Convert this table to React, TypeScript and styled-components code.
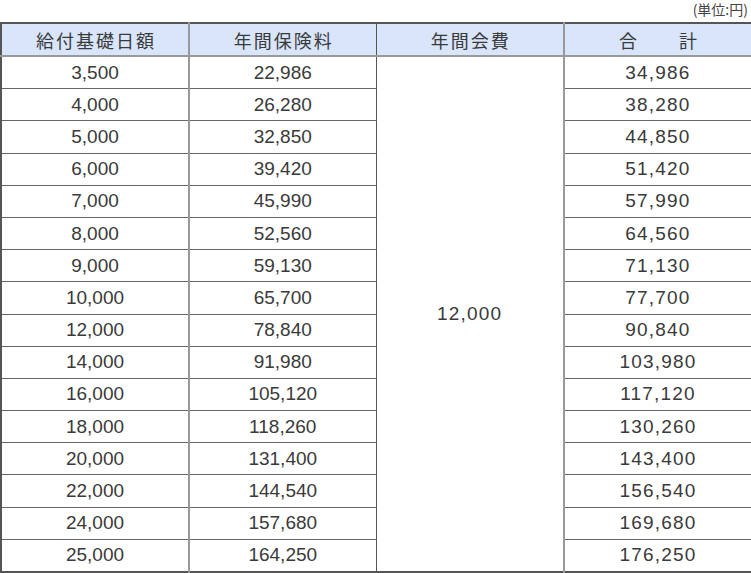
import React from "react";
import styled, { createGlobalStyle } from "styled-components";

const GlobalStyle = createGlobalStyle`
  html, body {
    margin: 0;
    padding: 0;
    background: #fff;
  }
  body {
    font-family: "Liberation Sans", Arial, "Noto Sans CJK JP", sans-serif;
    color: #333;
  }
`;

const rows = [
  ["3,500", "22,986", "34,986"],
  ["4,000", "26,280", "38,280"],
  ["5,000", "32,850", "44,850"],
  ["6,000", "39,420", "51,420"],
  ["7,000", "45,990", "57,990"],
  ["8,000", "52,560", "64,560"],
  ["9,000", "59,130", "71,130"],
  ["10,000", "65,700", "77,700"],
  ["12,000", "78,840", "90,840"],
  ["14,000", "91,980", "103,980"],
  ["16,000", "105,120", "117,120"],
  ["18,000", "118,260", "130,260"],
  ["20,000", "131,400", "143,400"],
  ["22,000", "144,540", "156,540"],
  ["24,000", "157,680", "169,680"],
  ["25,000", "164,250", "176,250"],
];

const Wrapper = styled.div`
  width: 751px;
`;

const Unit = styled.div`
  height: 22px;
  text-align: right;
  font-size: 14px;
  line-height: 18px;
  color: #444;
  padding-right: 3px;
  box-sizing: border-box;
  font-family: "Noto Sans CJK JP", sans-serif;
`;

const Table = styled.table`
  width: 751px;
  table-layout: fixed;
  border-collapse: collapse;
  border: 2px solid #555;
`;

const HeadCell = styled.th<{ $edge?: "light" | "dark" }>`
  height: 31px;
  padding: 0 0 0 2px;
  background: #d8e5fb;
  font-weight: normal;
  font-size: 18px;
  letter-spacing: 2px;
  color: #3a3a3a;
  font-family: "Noto Sans CJK JP", sans-serif;
  border-bottom: 2px solid #999;
  border-right: ${(p) =>
    p.$edge === "light" ? "2px solid #999" : p.$edge === "dark" ? "1px solid #555" : "none"};
  white-space: pre;
`;

const Cell = styled.td<{ $edge?: "light" | "dark"; $wide?: boolean }>`
  height: 31.2px;
  padding: 0;
  text-align: center;
  font-size: 19px;
  color: #3a3a3a;
  letter-spacing: ${(p) => (p.$wide ? "1.2px" : "0")};
  border-bottom: 1px solid #666;
  border-right: ${(p) =>
    p.$edge === "light" ? "2px solid #999" : p.$edge === "dark" ? "1px solid #555" : "none"};
`;

const App = () => {
  return (
    <Wrapper>
      <GlobalStyle />
      <Unit>(単位:円)</Unit>
      <Table>
        <colgroup>
          <col style={{ width: 188 }} />
          <col style={{ width: 187 }} />
          <col style={{ width: 188 }} />
          <col style={{ width: 188 }} />
        </colgroup>
        <thead>
          <tr>
            <HeadCell $edge="light">給付基礎日額</HeadCell>
            <HeadCell $edge="dark">年間保険料</HeadCell>
            <HeadCell $edge="light">年間会費</HeadCell>
            <HeadCell>{"合　　計"}</HeadCell>
          </tr>
        </thead>
        <tbody>
          {rows.map((r, i) => (
            <tr key={r[0]}>
              <Cell $edge="light">{r[0]}</Cell>
              <Cell $edge="dark">{r[1]}</Cell>
              {i === 0 && (
                <Cell $edge="light" $wide rowSpan={rows.length}>
                  12,000
                </Cell>
              )}
              <Cell $wide>{r[2]}</Cell>
            </tr>
          ))}
        </tbody>
      </Table>
    </Wrapper>
  );
};

export default App;
